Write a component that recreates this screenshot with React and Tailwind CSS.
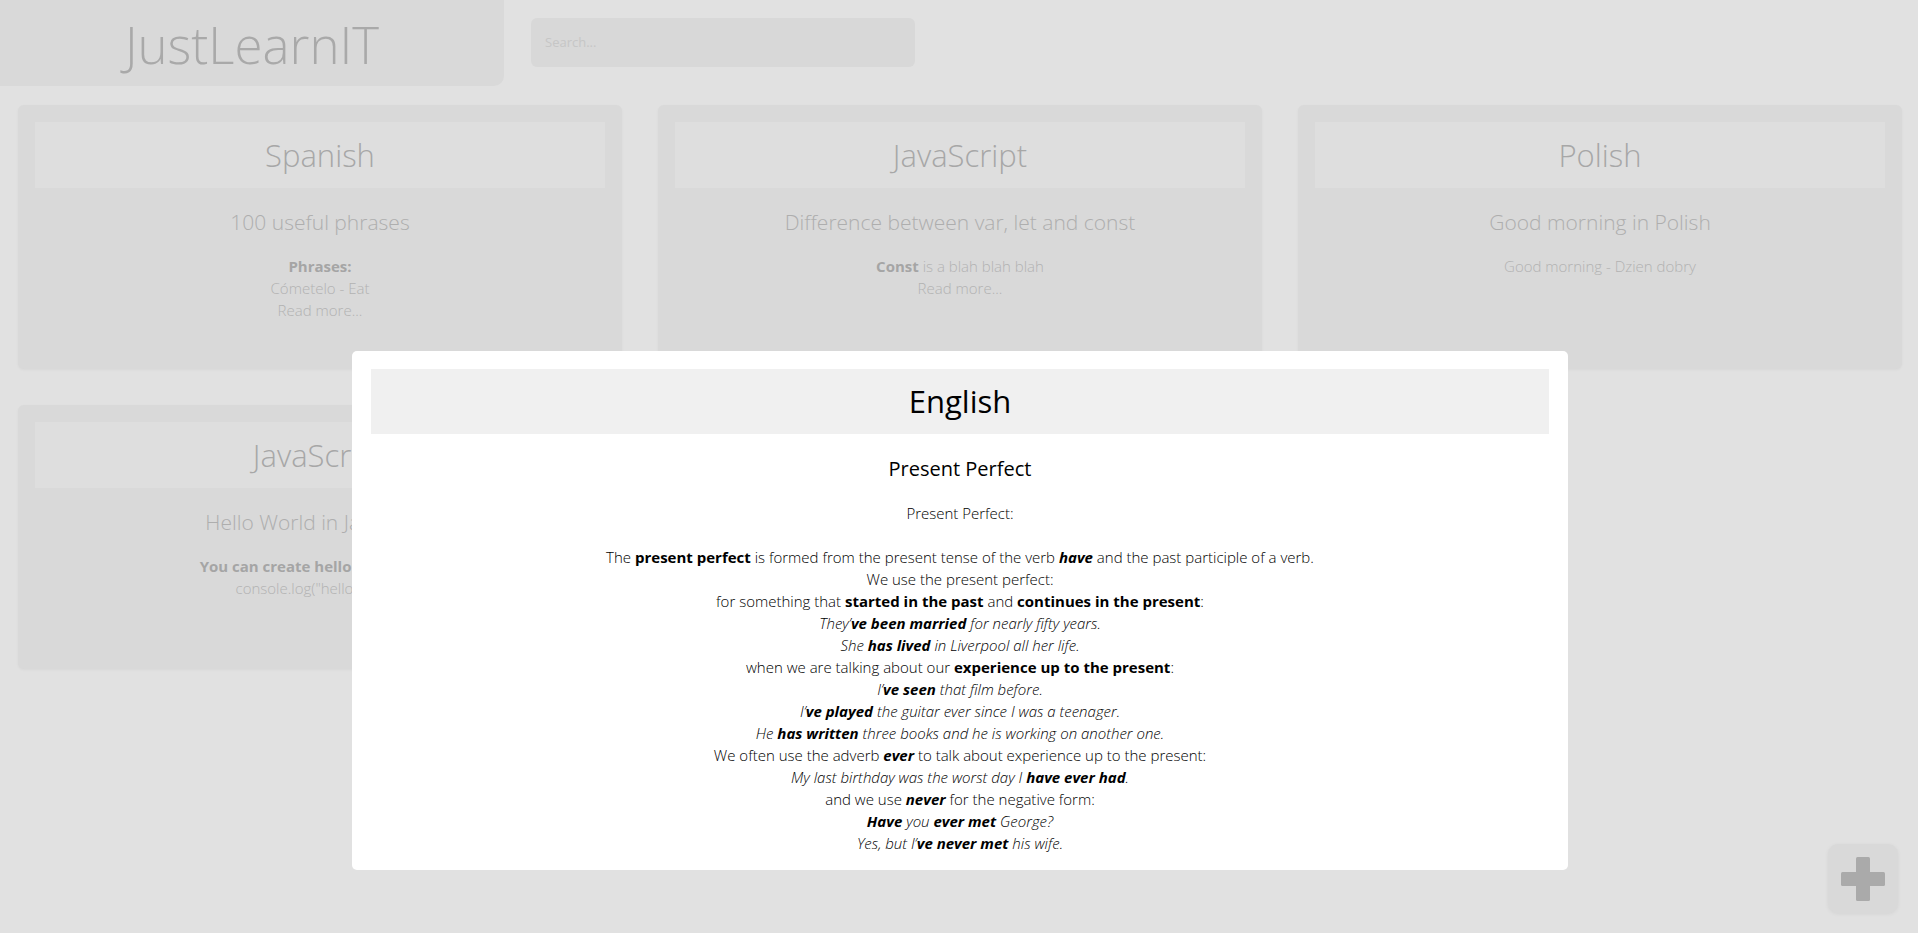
import React from "react";

const font = { fontFamily: '"Open Sans", "Noto Sans", sans-serif' };

function Card({ title, subtitle, children }) {
  return (
    <div className="h-[264px] rounded-[6px] bg-[#d9d9d9] p-[17px] shadow-[0_1px_3px_rgba(0,0,0,0.04)]">
      <div className="flex h-[66px] items-center justify-center bg-[#dedede]">
        <span className="text-[31px] font-light text-[#a7a7a7]">{title}</span>
      </div>
      <div className="mt-[20px] text-center text-[21px] font-light leading-[28px] text-[#aeaeae]">{subtitle}</div>
      <div className="mt-[19px] text-center text-[15px] font-light leading-[22px] text-[#b2b2b2]">{children}</div>
    </div>
  );
}

function B({ children }) {
  return <b className="font-bold">{children}</b>;
}

export default function App() {
  return (
    <div className="relative h-[933px] w-full overflow-hidden bg-[#e1e1e1]" style={font}>
      <div className="flex items-start">
        <div className="flex h-[86px] w-[504px] items-center justify-center rounded-br-[10px] bg-[#d9d9d9]">
          <span className="mt-[3px] text-[51px] font-light leading-none text-[#a9a9a9]">JustLearnIT</span>
        </div>
        <div className="ml-[27px] mt-[18px] flex h-[49px] w-[384px] items-center rounded-[6px] bg-[#d8d8d8] px-[14px]">
          <span className="text-[13px] text-[#c6c6c6]">Search...</span>
        </div>
      </div>

      <div className="mt-[19px] grid grid-cols-3 gap-x-[36px] gap-y-[36px] pl-[18px] pr-[16px]">
        <Card title="Spanish" subtitle="100 useful phrases">
          <div className="font-bold text-[#a5a5a5]">Phrases:</div>
          <div>Cómetelo - Eat</div>
          <div>Read more...</div>
        </Card>
        <Card title="JavaScript" subtitle="Difference between var, let and const">
          <div>
            <span className="font-bold text-[#a5a5a5]">Const</span> is a blah blah blah
          </div>
          <div>Read more...</div>
        </Card>
        <Card title="Polish" subtitle="Good morning in Polish">
          <div>Good morning - Dzien dobry</div>
        </Card>
        <Card title="JavaScript" subtitle="Hello World in JavaScript">
          <div className="font-bold text-[#a5a5a5]">You can create hello world with:</div>
          <div>console.log("hello world")</div>
        </Card>
      </div>

      <div className="absolute left-[1828px] top-[844px] flex h-[69px] w-[70px] items-center justify-center rounded-[10px] bg-[#d9d9d9] shadow-[0_1px_4px_rgba(0,0,0,0.06)]">
        <svg width="44" height="44" viewBox="0 0 44 44">
          <rect x="15" y="0" width="14" height="44" rx="1.5" fill="#aaaaaa" />
          <rect x="0" y="15" width="44" height="14" rx="1.5" fill="#aaaaaa" />
        </svg>
      </div>

      <div className="absolute left-[352px] top-[351px] h-[519px] w-[1216px] rounded-[5px] bg-white px-[19px] pt-[18px] text-black">
        <div className="flex h-[65px] items-center justify-center bg-[#f0f0f0]">
          <span className="text-[31px] font-normal">English</span>
        </div>
        <div className="mt-[21px] text-center text-[20px] leading-[28px]">Present Perfect</div>
        <div className="mt-[19px] text-center text-[15px] font-light leading-[22px]">
          <div>Present Perfect:</div>
          <div>&nbsp;</div>
          <div>
            The <B>present perfect</B> is formed from the present tense of the verb <B><i>have</i></B> and the past participle of a verb.
          </div>
          <div>We use the present perfect:</div>
          <div>
            for something that <B>started in the past</B> and <B>continues in the present</B>:
          </div>
          <div className="italic">
            They’<B>ve been married</B> for nearly fifty years.
          </div>
          <div className="italic">
            She <B>has lived</B> in Liverpool all her life.
          </div>
          <div>
            when we are talking about our <B>experience up to the present</B>:
          </div>
          <div className="italic">
            I’<B>ve seen</B> that film before.
          </div>
          <div className="italic">
            I’<B>ve played</B> the guitar ever since I was a teenager.
          </div>
          <div className="italic">
            He <B>has written</B> three books and he is working on another one.
          </div>
          <div>
            We often use the adverb <B><i>ever</i></B> to talk about experience up to the present:
          </div>
          <div className="italic">
            My last birthday was the worst day I <B>have ever had</B>.
          </div>
          <div>
            and we use <B><i>never</i></B> for the negative form:
          </div>
          <div className="italic">
            <B>Have</B> you <B>ever met</B> George?
          </div>
          <div className="italic">
            Yes, but I’<B>ve never met</B> his wife.
          </div>
        </div>
      </div>
    </div>
  );
}
